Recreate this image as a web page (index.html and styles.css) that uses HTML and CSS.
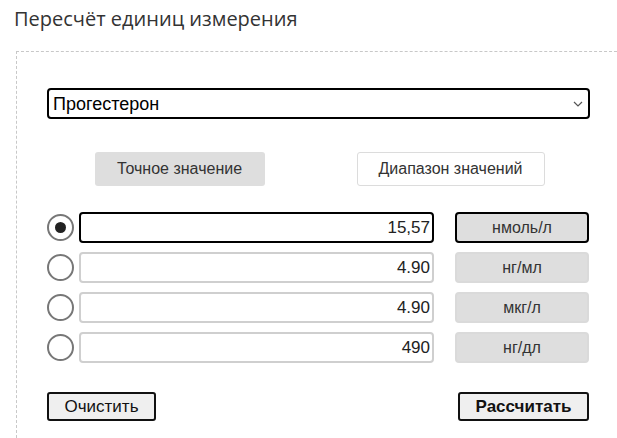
FILE: index.html
```html
<!DOCTYPE html>
<html lang="ru">
<head>
<meta charset="utf-8">
<link rel="stylesheet" href="styles.css">
</head>
<body>
<h1 class="title">Пересчёт единиц измерения</h1>
<div class="panel">
  <div class="select-wrap">
    <select class="analyte">
      <option>Прогестерон</option>
    </select>
    <svg class="chevron" width="10" height="6" viewBox="0 0 10 6"><path d="M1 1 L5 5 L9 1" fill="none" stroke="#555" stroke-width="1.2"/></svg>
  </div>
  <div class="modes">
    <button class="mode mode-active">Точное значение</button>
    <button class="mode mode-range">Диапазон значений</button>
  </div>
  <div class="rows">
    <div class="row">
      <input type="radio" name="u" class="radio" checked>
      <input type="text" class="val val-active" value="15,57">
      <button class="unit unit-active">нмоль/л</button>
    </div>
    <div class="row">
      <input type="radio" name="u" class="radio">
      <input type="text" class="val" value="4.90">
      <button class="unit">нг/мл</button>
    </div>
    <div class="row">
      <input type="radio" name="u" class="radio">
      <input type="text" class="val" value="4.90">
      <button class="unit">мкг/л</button>
    </div>
    <div class="row">
      <input type="radio" name="u" class="radio">
      <input type="text" class="val" value="490">
      <button class="unit">нг/дл</button>
    </div>
  </div>
  <div class="actions">
    <button class="act">Очистить</button>
    <button class="act act-bold">Рассчитать</button>
  </div>
</div>
</body>
</html>
```

FILE: styles.css
```css
html, body {
  margin: 0;
  padding: 0;
  background: #fff;
}
body {
  font-family: "Liberation Sans", Arial, sans-serif;
  color: #222;
  width: 617px;
  height: 438px;
  overflow: hidden;
}
.title {
  font-family: "Open Sans", "Noto Sans", sans-serif;
  font-weight: 400;
  font-size: 20px;
  line-height: 26px;
  color: #333;
  margin: 6px 0 0 14px;
}
.panel {
  margin: 19px 0 0 16px;
  height: 387px;
  border: 1px dashed #c8c8c8;
  border-right: none;
  border-bottom: none;
  box-sizing: border-box;
  padding: 36px 0 0 30px;
}
.select-wrap {
  position: relative;
  width: 543px;
}
.analyte {
  appearance: none;
  -webkit-appearance: none;
  width: 543px;
  height: 31px;
  border: 2px solid #000;
  border-radius: 4px;
  background: #fff;
  font-family: "Liberation Sans", Arial, sans-serif;
  font-size: 18px;
  color: #000;
  padding: 0 0 0 4px;
  margin: 0;
  box-sizing: border-box;
  outline: none;
}
.chevron {
  position: absolute;
  right: 7px;
  top: 13px;
  pointer-events: none;
}
.modes {
  display: grid;
  grid-template-columns: 272px 271px;
  margin-top: 33px;
  width: 543px;
}
.mode {
  justify-self: center;
  height: 34px;
  font-family: "Liberation Sans", Arial, sans-serif;
  font-size: 16px;
  color: #333;
  border-radius: 3px;
  padding: 0;
  margin: 0;
  box-sizing: border-box;
}
.mode-active {
  width: 170px;
  background: #dedede;
  border: none;
  margin-left: -7px;
}
.mode-range {
  width: 188px;
  background: #fff;
  border: 1px solid #dcdcdc;
  margin-left: -8px;
}
.rows {
  margin-top: 26px;
  display: flex;
  flex-direction: column;
  gap: 9px;
}
.row {
  display: flex;
  align-items: center;
  height: 31px;
}
.radio {
  appearance: none;
  -webkit-appearance: none;
  width: 27px;
  height: 27px;
  margin: 0;
  border: 2px solid #777;
  border-radius: 50%;
  box-sizing: border-box;
  background: #fff;
  display: grid;
  place-content: center;
}
.radio:checked::before {
  content: "";
  width: 11px;
  height: 11px;
  border-radius: 50%;
  background: #222;
}
.val {
  margin: 0 0 0 5px;
  width: 355px;
  height: 31px;
  box-sizing: border-box;
  border: 2px solid #cfcfcf;
  border-radius: 4px;
  text-align: right;
  padding: 0 2px 0 2px;
  font-family: "Liberation Sans", Arial, sans-serif;
  font-size: 17px;
  color: #222;
  background: #fff;
  outline: none;
}
.val-active {
  border-color: #000;
}
.unit {
  margin: 0 0 0 21px;
  width: 134px;
  height: 31px;
  box-sizing: border-box;
  background: #dedede;
  border: 2px solid #dadada;
  border-radius: 4px;
  font-family: "Liberation Sans", Arial, sans-serif;
  font-size: 16px;
  color: #333;
  padding: 0;
}
.unit-active {
  border-color: #000;
}
.actions {
  display: flex;
  justify-content: space-between;
  width: 542px;
  margin-top: 29px;
}
.act {
  height: 29px;
  box-sizing: border-box;
  background: #efefef;
  border: 2px solid #111;
  border-radius: 3px;
  font-family: "Liberation Sans", Arial, sans-serif;
  font-size: 17px;
  color: #111;
  padding: 0;
  width: 109px;
}
.act-bold {
  font-weight: 700;
  width: 131px;
}
```
